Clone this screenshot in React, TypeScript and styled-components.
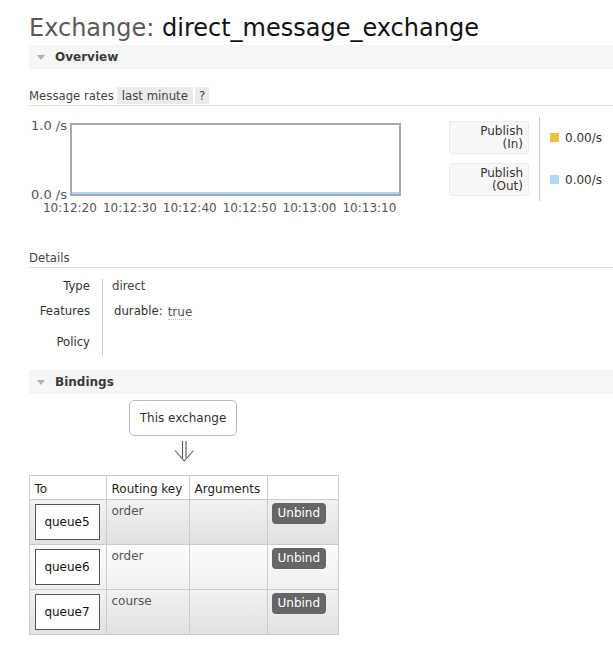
import React from "react";
import styled, { createGlobalStyle } from "styled-components";

const COND = `"DejaVu Sans Condensed", "DejaVu Sans", sans-serif`;

const GlobalStyle = createGlobalStyle`
  html, body { margin: 0; padding: 0; background: #fff; }
  body {
    font-family: "DejaVu Sans", Verdana, sans-serif;
    font-size: 12px;
    color: #484848;
  }
  * { box-sizing: border-box; }
`;

const Page = styled.div`
  width: 613px;
  overflow: hidden;
  padding: 13px 0 20px 29px;
`;

const Title = styled.h1`
  margin: 0;
  height: 30px;
  font-size: 24px;
  line-height: 30px;
  font-weight: normal;
  color: #5a5a5a;
  white-space: nowrap;
`;

const TitleName = styled.span`
  color: #111;
`;

const SectionBar = styled.div<{ $mt: number }>`
  margin-top: ${(p) => p.$mt}px;
  height: 24px;
  background: #f6f6f6;
  display: flex;
  align-items: center;
  gap: 10px;
  padding-left: 8px;
  font-weight: bold;
  font-size: 12px;
  color: #3a3a3a;
`;

const Caret = styled.span`
  width: 0;
  height: 0;
  border-left: 4px solid transparent;
  border-right: 4px solid transparent;
  border-top: 5px solid #b0b0b0;
`;

const RatesHeader = styled.div`
  margin-top: 18px;
  display: flex;
  gap: 2px;
  padding-bottom: 1px;
  border-bottom: 1px solid #e2e2e2;
  font-family: ${COND};
  font-size: 13px;
  line-height: 17px;
  color: #444;
`;

const RatesTitle = styled.span`
  margin-right: 1px;
`;

const Pill = styled.span<{ $px: number }>`
  background: #ebebeb;
  padding: 0 ${(p) => p.$px}px;
`;

const ChartRow = styled.div`
  margin-top: 11px;
  display: flex;
  align-items: flex-start;
`;

const Chart = styled.div`
  width: 372px;
  padding-top: 6px;
`;

const PlotRow = styled.div`
  display: flex;
`;

const YAxis = styled.div`
  width: 41px;
  height: 83px;
  margin: -4px 0 -6px;
  padding-right: 3px;
  display: flex;
  flex-direction: column;
  justify-content: space-between;
  align-items: flex-end;
  font-size: 13px;
  line-height: 14px;
  color: #555;
`;

const Plot = styled.div`
  width: 331px;
  height: 73px;
  border: 2px solid #a9a9a9;
  display: flex;
  align-items: flex-end;
`;

const Series = styled.div`
  width: 100%;
  height: 2px;
  background: #afd8f8;
`;

const XAxis = styled.div`
  display: flex;
  margin: 5px 0 0 11px;
`;

const XLabel = styled.span`
  width: 59.9px;
  flex: none;
  text-align: center;
  line-height: 14px;
  color: #555;
  white-space: nowrap;
`;

const Legend = styled.div`
  margin-left: 48px;
  display: flex;
`;

const LegendLabels = styled.div`
  padding-top: 4px;
  display: flex;
  flex-direction: column;
  gap: 9px;
`;

const LegendBox = styled.div`
  width: 80px;
  height: 33px;
  border: 1px solid #ececec;
  border-radius: 3px;
  background: #f8f8f8;
  text-align: right;
  padding: 3px 5px 0 0;
  line-height: 13px;
  color: #333;
`;

const LegendValues = styled.div`
  margin-left: 10px;
  height: 84px;
  border-left: 1px solid #ccc;
  padding: 4px 0 0 10px;
  display: flex;
  flex-direction: column;
  gap: 9px;
`;

const LegendValue = styled.div`
  height: 33px;
  display: flex;
  align-items: center;
  gap: 6px;
  color: #333;
`;

const Swatch = styled.span<{ $c: string }>`
  width: 9px;
  height: 9px;
  background: ${(p) => p.$c};
`;

const DetailsHeading = styled.div`
  margin-top: 35px;
  font-family: ${COND};
  font-size: 13px;
  line-height: 16px;
  padding-bottom: 1px;
  border-bottom: 1px solid #ddd;
  color: #444;
`;

const DetailsGrid = styled.div`
  margin-top: 11px;
`;

const DetailRow = styled.div<{ $h: number }>`
  display: grid;
  grid-template-columns: 73px 1fr;
  height: ${(p) => p.$h}px;
`;

const DetailLabel = styled.div<{ $pt: number }>`
  text-align: right;
  padding: ${(p) => p.$pt}px 12px 0 0;
  font-family: ${COND};
  font-size: 13px;
  line-height: 14px;
  color: #333;
`;

const DetailValue = styled.div<{ $pt: number }>`
  border-left: 1px solid #ccc;
  padding: ${(p) => p.$pt}px 0 0 9px;
  font-family: ${COND};
  font-size: 13px;
  line-height: 14px;
  color: #444;
  display: flex;
  align-items: flex-start;
`;

const FeatureKey = styled.span`
  margin-left: 2px;
  color: #333;
`;

const FeatureVal = styled.abbr`
  margin-left: 5px;
  margin-top: 1px;
  font-family: "DejaVu Sans", sans-serif;
  font-size: 12px;
  text-decoration: none;
  border-bottom: 1px dotted #bbb;
  color: #555;
`;

const Bindings = styled.div`
  width: 309px;
  margin-top: 6px;
  display: flex;
  flex-direction: column;
  align-items: center;
`;

const ExchangeBox = styled.div`
  width: 108px;
  height: 36px;
  margin-left: -1px;
  border: 1px solid #bbb;
  border-radius: 5px;
  line-height: 34px;
  text-align: center;
  color: #333;
`;

const ArrowIcon = styled.svg`
  margin-top: 4px;
  display: block;
`;

const BindTable = styled.table`
  margin-top: 13px;
  width: 309px;
  border-collapse: collapse;
  table-layout: fixed;
`;

const Th = styled.th<{ $w: number }>`
  width: ${(p) => p.$w}px;
  border: 1px solid #ccc;
  text-align: left;
  font-weight: normal;
  padding: 2px 5px 0;
  height: 24px;
  color: #222;
  background: #fff;
`;

const Tr = styled.tr<{ $alt: boolean }>`
  background: ${(p) =>
    p.$alt
      ? "linear-gradient(#fcfcfc, #efefef)"
      : "linear-gradient(#f1f1f1, #e1e1e1)"};
`;

const Td = styled.td`
  border: 1px solid #ccc;
  vertical-align: top;
  padding: 4px 5px;
  height: 45px;
  line-height: 14px;
  color: #555;
`;

const QueueBox = styled.div`
  width: 65px;
  height: 36px;
  border: 1px solid #555;
  background: #fff;
  text-align: center;
  line-height: 34px;
  color: #111;
`;

const UnbindButton = styled.button`
  height: 21px;
  margin: -1px 0 0 -1px;
  padding: 0 6px;
  border: none;
  border-radius: 4px;
  background: #666;
  color: #fff;
  font-family: "DejaVu Sans", sans-serif;
  font-size: 12px;
  line-height: 21px;
`;

const xTicks = ["10:12:20", "10:12:30", "10:12:40", "10:12:50", "10:13:00", "10:13:10"];

const bindings = [
  { queue: "queue5", key: "order" },
  { queue: "queue6", key: "order" },
  { queue: "queue7", key: "course" },
];

export default function App() {
  return (
    <>
      <GlobalStyle />
      <Page>
        <Title>
          Exchange: <TitleName>direct_message_exchange</TitleName>
        </Title>

        <SectionBar $mt={2}>
          <Caret />
          Overview
        </SectionBar>

        <RatesHeader>
          <RatesTitle>Message rates</RatesTitle>
          <Pill $px={5}>last minute</Pill>
          <Pill $px={4}>?</Pill>
        </RatesHeader>

        <ChartRow>
          <Chart>
            <PlotRow>
              <YAxis>
                <span>1.0 /s</span>
                <span>0.0 /s</span>
              </YAxis>
              <Plot>
                <Series />
              </Plot>
            </PlotRow>
            <XAxis>
              {xTicks.map((t) => (
                <XLabel key={t}>{t}</XLabel>
              ))}
            </XAxis>
          </Chart>
          <Legend>
            <LegendLabels>
              <LegendBox>
                Publish
                <br />
                (In)
              </LegendBox>
              <LegendBox>
                Publish
                <br />
                (Out)
              </LegendBox>
            </LegendLabels>
            <LegendValues>
              <LegendValue>
                <Swatch $c="#edc240" />
                0.00/s
              </LegendValue>
              <LegendValue>
                <Swatch $c="#afd8f8" />
                0.00/s
              </LegendValue>
            </LegendValues>
          </Legend>
        </ChartRow>

        <DetailsHeading>Details</DetailsHeading>
        <DetailsGrid>
          <DetailRow $h={20}>
            <DetailLabel $pt={0}>Type</DetailLabel>
            <DetailValue $pt={0}>direct</DetailValue>
          </DetailRow>
          <DetailRow $h={27}>
            <DetailLabel $pt={5}>Features</DetailLabel>
            <DetailValue $pt={5}>
              <FeatureKey>durable:</FeatureKey>
              <FeatureVal title="durable">true</FeatureVal>
            </DetailValue>
          </DetailRow>
          <DetailRow $h={30}>
            <DetailLabel $pt={9}>Policy</DetailLabel>
            <DetailValue $pt={9} />
          </DetailRow>
        </DetailsGrid>

        <SectionBar $mt={14}>
          <Caret />
          Bindings
        </SectionBar>

        <Bindings>
          <ExchangeBox>This exchange</ExchangeBox>
          <ArrowIcon width="20" height="22" viewBox="0 0 20 22">
            <g fill="none" stroke="#555" strokeWidth="1.1">
              <line x1="8.5" y1="1" x2="8.5" y2="18" />
              <line x1="12" y1="1" x2="12" y2="18" />
              <polyline points="1,10.5 10.2,21 19.5,10.5" />
            </g>
          </ArrowIcon>
          <BindTable>
            <thead>
              <tr>
                <Th $w={77}>To</Th>
                <Th $w={83}>Routing key</Th>
                <Th $w={78}>Arguments</Th>
                <Th $w={71}></Th>
              </tr>
            </thead>
            <tbody>
              {bindings.map((b, i) => (
                <Tr key={b.queue} $alt={i % 2 === 1}>
                  <Td>
                    <QueueBox>{b.queue}</QueueBox>
                  </Td>
                  <Td>{b.key}</Td>
                  <Td></Td>
                  <Td>
                    <UnbindButton>Unbind</UnbindButton>
                  </Td>
                </Tr>
              ))}
            </tbody>
          </BindTable>
        </Bindings>
      </Page>
    </>
  );
}
